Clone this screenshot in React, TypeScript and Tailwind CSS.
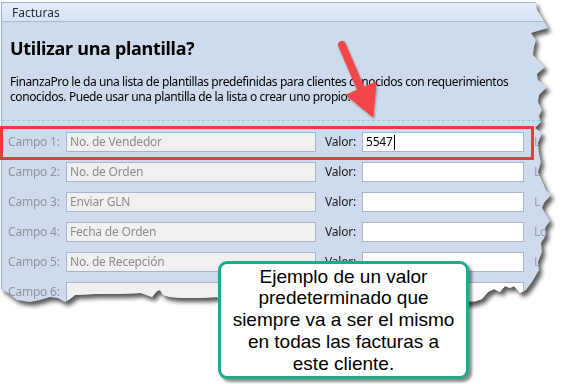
import React from "react";

const clip =
  "[clip-path:polygon(0px_0px,535px_0px,537px_10px,542px_18px,548px_28px,531px_33px,536px_40px,534px_47px,533px_55px,540px_62px,545px_67px,537px_74px,538px_80px,547px_87px,539px_95px,538px_102px,542px_110px,539px_116px,541px_122px,535px_128px,542px_133px,538px_143px,539px_153px,541px_162px,538px_172px,543px_183px,546px_190px,551px_195px,544px_203px,542px_208px,547px_216px,550px_221px,545px_228px,546px_235px,541px_243px,542px_252px,538px_262px,539px_270px,535px_277px,532px_282px,526px_290px,520px_293px,514px_286px,510px_288px,505px_286px,500px_292px,494px_289px,488px_292px,482px_299px,473px_302px,465px_303px,220px_300px,217px_297px,200px_298px,182px_298px,170px_297px,163px_295px,160px_290px,157px_291px,152px_297px,141px_293px,118px_294px,95px_294px,75px_295px,70px_299px,65px_302px,58px_298px,50px_297px,40px_300px,30px_302px,17px_300px,8px_293px,0px_288px)]";

const rows = [
  { label: "Campo 1:", field: "No. de Vendedor", value: "5547", extra: "L" },
  { label: "Campo 2:", field: "No. de Orden", value: "", extra: "L" },
  { label: "Campo 3:", field: "Enviar GLN", value: "", extra: "L" },
  { label: "Campo 4:", field: "Fecha de Orden", value: "", extra: "Lo" },
  { label: "Campo 5:", field: "No. de Recepción", value: "", extra: "L" },
  { label: "Campo 6:", field: "", value: "", extra: "L" },
];

export default function App() {
  return (
    <div className="relative w-[571px] h-[384px] bg-white overflow-hidden" style={{ fontFamily: '"Noto Sans", "Open Sans", sans-serif' }}>
      <div className="[filter:drop-shadow(3px_4px_2px_rgba(0,0,0,0.65))]">
        <div className={`${clip} pt-[2px] pl-[1px]`}>
          <div className="w-[560px] h-[310px] border border-[#9fb3cf] bg-[#cedbed]">
            <div className="h-[19px] bg-gradient-to-b from-[#e6eef9] to-[#d7e3f3] border-b border-[#a9bcd6] pl-[10px] text-[12px] leading-[19px] text-[#1b2a3d]">
              Facturas
            </div>
            <div className="pl-[8px] pt-[14px]">
              <div className="text-[18px] leading-[24px] font-bold text-black tracking-[-0.3px]">Utilizar una plantilla?</div>
              <div className="mt-[14px] text-[12px] leading-[15px] text-black tracking-[-0.4px] w-[520px]">
                FinanzaPro le da una lista de plantillas predefinidas para clientes conocidos con requerimientos conocidos. Puede usar una plantilla de la lista o crear uno propio.
              </div>
            </div>
            <div className="mt-[16px] border-t border-dashed border-[#b3c0d2]" />
            <div className="flex flex-col gap-[10px] pt-[11px]">
              {rows.map((r, i) => (
                <div key={i} className="flex items-center h-[20px] text-[12px] tracking-[-0.2px]">
                  <div className="w-[64px] pl-[6px] text-[#8e959e]">{r.label}</div>
                  <div className="w-[250px] h-[20px] border border-[#a8b5c6] bg-[#f0f0f0] pl-[3px] leading-[18px] text-[#8c8c8c]">{r.field}</div>
                  <div className="w-[46px] pl-[9px] text-[#1a1a1a]">{i < 5 ? "Valor:" : ""}</div>
                  <div className="w-[162px] h-[20px] border border-[#a8b5c6] bg-white pl-[3px] leading-[18px] text-black flex items-center">
                    {r.value}
                    {r.value && <span className="inline-block w-px h-[15px] bg-black ml-px" />}
                  </div>
                  <div className="pl-[10px] text-[#9aa3ae]">{r.extra}</div>
                </div>
              ))}
            </div>
          </div>
        </div>
      </div>

      <div className="absolute left-0 top-[126px] w-[534px] h-[34px] border-[3px] border-[#f0393c]" />

      <svg className="absolute left-0 top-0" width="571" height="384" viewBox="0 0 571 384">
        <defs>
          <filter id="as" x="-20%" y="-20%" width="140%" height="140%">
            <feDropShadow dx="1" dy="1.5" stdDeviation="1" floodColor="#000" floodOpacity="0.3" />
          </filter>
        </defs>
        <g filter="url(#as)" fill="#f2474a" stroke="#f2474a">
          <line x1="342" y1="45" x2="363" y2="94" strokeWidth="8" strokeLinecap="round" />
          <polygon points="373,117 346,95 376,82" strokeWidth="1" strokeLinejoin="round" />
        </g>
      </svg>

      <div className="absolute left-[218px] top-[261px] w-[251px] h-[118px] rounded-[9px] border-[3px] border-[#1eaa8b] bg-white shadow-[3px_3px_3px_rgba(0,0,0,0.45)] flex items-center justify-center">
        <div className="text-center text-[19px] leading-[21.8px] text-black" style={{ fontFamily: '"Liberation Sans", Arial, sans-serif' }}>
          Ejemplo de un valor
          <br />
          predeterminado que
          <br />
          siempre va a ser el mismo
          <br />
          en todas las facturas a
          <br />
          este cliente.
        </div>
      </div>
    </div>
  );
}
